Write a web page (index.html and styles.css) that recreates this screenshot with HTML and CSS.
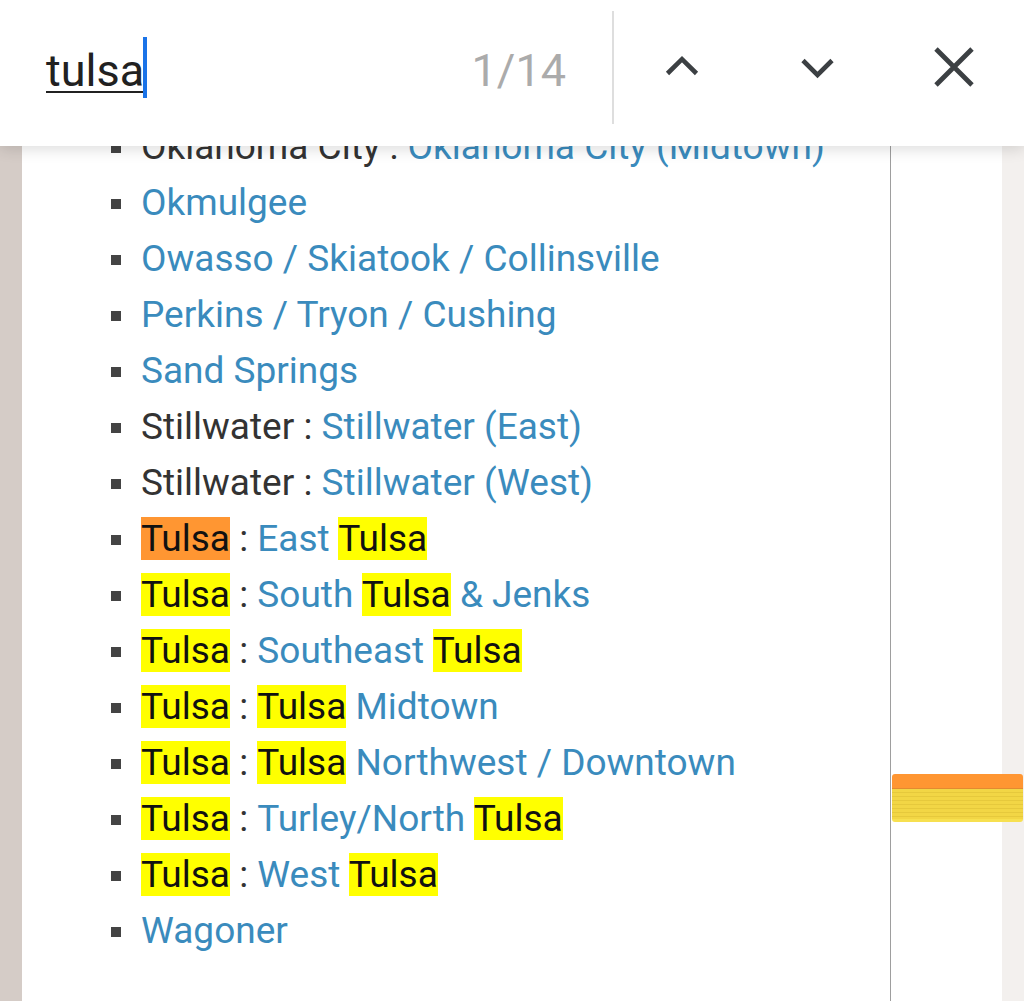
FILE: index.html
```html
<!DOCTYPE html>
<html lang="en">
<head>
<meta charset="utf-8">
<title>Find in page</title>
<link rel="stylesheet" href="styles.css">
</head>
<body>
<div class="page">
  <div class="gutter"></div>
  <main class="content">
    <ul class="towns">
      <li><span class="plain">Oklahoma City : </span><a>Oklahoma City (Midtown)</a></li>
      <li><a>Okmulgee</a></li>
      <li><a>Owasso / Skiatook / Collinsville</a></li>
      <li><a>Perkins / Tryon / Cushing</a></li>
      <li><a>Sand Springs</a></li>
      <li><span class="plain">Stillwater : </span><a>Stillwater (East)</a></li>
      <li><span class="plain">Stillwater : </span><a>Stillwater (West)</a></li>
      <li><span class="plain"><mark class="active">Tulsa</mark> : </span><a>East <mark>Tulsa</mark></a></li>
      <li><span class="plain"><mark>Tulsa</mark> : </span><a>South <mark>Tulsa</mark> &amp; Jenks</a></li>
      <li><span class="plain"><mark>Tulsa</mark> : </span><a>Southeast <mark>Tulsa</mark></a></li>
      <li><span class="plain"><mark>Tulsa</mark> : </span><a><mark>Tulsa</mark> Midtown</a></li>
      <li><span class="plain"><mark>Tulsa</mark> : </span><a><mark>Tulsa</mark> Northwest / Downtown</a></li>
      <li><span class="plain"><mark>Tulsa</mark> : </span><a>Turley/North <mark>Tulsa</mark></a></li>
      <li><span class="plain"><mark>Tulsa</mark> : </span><a>West <mark>Tulsa</mark></a></li>
      <li><a>Wagoner</a></li>
    </ul>
  </main>
  <aside class="side"></aside>
  <div class="strip"></div>
  <div class="marks">
    <div class="mark-active"></div>
    <div class="mark-rest"></div>
  </div>
</div>

<header class="findbar">
  <div class="field">
    <div class="query"><span class="qtext">tulsa</span><span class="caret"></span></div>
    <div class="count">1/14</div>
  </div>
  <div class="divider"></div>
  <button class="btn" aria-label="Previous">
    <svg width="40" height="40" viewBox="0 0 40 40"><path d="M5.5 26.5 L20 12.2 L34.5 26.5" fill="none" stroke="#3c4043" stroke-width="4.6" stroke-linecap="butt" stroke-linejoin="miter"/></svg>
  </button>
  <button class="btn" aria-label="Next">
    <svg width="40" height="40" viewBox="0 0 40 40"><path d="M5 13.5 L19.5 28 L34 13.5" fill="none" stroke="#3c4043" stroke-width="4.6" stroke-linecap="butt" stroke-linejoin="miter"/></svg>
  </button>
  <button class="btn" aria-label="Close">
    <svg width="44" height="44" viewBox="0 0 44 44"><path d="M4 4 L40 40 M40 4 L4 40" fill="none" stroke="#3c4043" stroke-width="4.8" stroke-linecap="butt"/></svg>
  </button>
</header>
</body>
</html>
```

FILE: styles.css
```css
html, body {
  margin: 0;
  padding: 0;
}
body {
  width: 1024px;
  height: 1001px;
  overflow: hidden;
  position: relative;
  font-family: Roboto, "Liberation Sans", sans-serif;
  background: #ffffff;
}

/* ---------- page ---------- */
.page {
  display: flex;
  height: 1001px;
  position: relative;
}
.gutter {
  width: 22px;
  flex: none;
  background: #d5ccc7;
}
.content {
  width: 868px;
  flex: none;
  background: #ffffff;
  border-right: 1px solid #9e9e9e;
}
.side {
  width: 111px;
  flex: none;
  background: #ffffff;
}
.strip {
  flex: 1;
  background: #f3f0ee;
}

.towns {
  list-style: none;
  margin: 0;
  padding: 119px 0 0 89px;
  font-size: 37px;
  line-height: 56px;
  color: #333333;
}
.towns li {
  display: flex;
  align-items: center;
  white-space: nowrap;
}
.towns li::before {
  content: "";
  width: 10px;
  height: 10px;
  background: #444444;
  flex: none;
  margin-right: 20px;
  margin-top: 1px;
}
.towns .plain {
  white-space: pre;
}
.towns a {
  color: #3a8bbd;
  text-decoration: none;
}
mark {
  background: #ffff00;
  color: #111111;
}
mark.active {
  background: #ff9632;
}

/* scrollbar tick marks */
.marks {
  position: absolute;
  left: 892px;
  top: 774px;
  width: 131px;
  display: flex;
  flex-direction: column;
  border-radius: 3px;
  overflow: hidden;
}
.mark-active {
  height: 15px;
  background: #ff9632;
  border-bottom: 1px solid #e38a30;
  box-sizing: border-box;
}
.mark-rest {
  height: 33px;
  background: repeating-linear-gradient(to bottom, #f2d645 0 3px, #e6c93c 3px 4px);
  border-bottom: 3px solid #f7e050;
  box-sizing: border-box;
}

/* ---------- find bar ---------- */
.findbar {
  position: absolute;
  left: 0;
  top: 0;
  width: 1024px;
  height: 146px;
  box-sizing: border-box;
  padding: 0 0 12px 46px;
  background: #ffffff;
  display: flex;
  align-items: center;
  box-shadow: 0 3px 14px rgba(0, 0, 0, 0.14);
}
.field {
  width: 520px;
  display: flex;
  align-items: center;
  justify-content: space-between;
}
.query {
  display: flex;
  align-items: center;
}
.qtext {
  font-size: 45px;
  color: #212121;
  text-decoration: underline;
  text-decoration-thickness: 2px;
  text-underline-offset: 5px;
  margin-top: 6px;
}
.caret {
  width: 4px;
  height: 61px;
  background: #1a73e8;
  margin-left: -1px;
}
.count {
  font-size: 45px;
  color: #ababab;
  margin-top: 6px;
}
.divider {
  width: 2px;
  height: 113px;
  background: #dedede;
  margin-left: 46px;
}
.btn {
  width: 136px;
  height: 80px;
  border: 0;
  background: transparent;
  padding: 0;
  display: flex;
  align-items: center;
  justify-content: center;
}
```
